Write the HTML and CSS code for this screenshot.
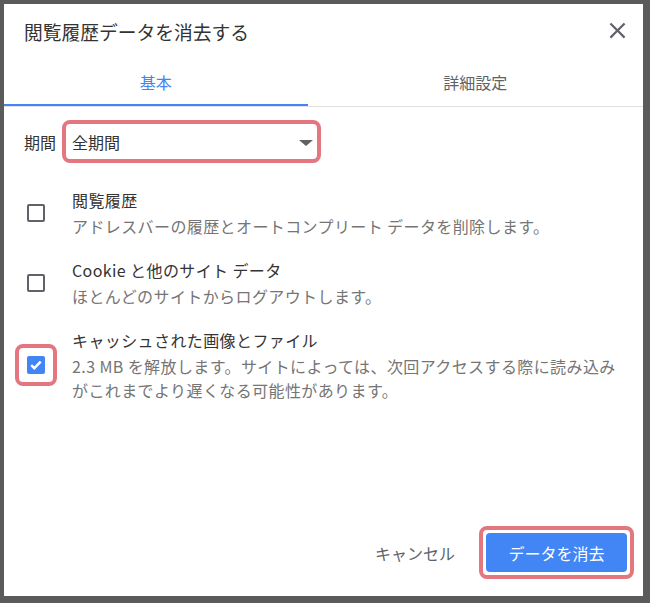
FILE: index.html
```html
<!DOCTYPE html>
<html lang="ja">
<head>
    <meta charset="UTF-8">
    <meta name="viewport" content="width=device-width, initial-scale=1.0">
    <title>閲覧履歴データを消去する</title>
    <link rel="stylesheet" href="styles.css">
</head>
<body>
    <div class="dialog">
        <div class="dialog-header">
            <h1 class="dialog-title">閲覧履歴データを消去する</h1>
            <button class="close-btn" aria-label="閉じる">
                <svg viewBox="0 0 24 24" width="27" height="27">
                    <path d="M19 6.41L17.59 5 12 10.59 6.41 5 5 6.41 10.59 12 5 17.59 6.41 19 12 13.41 17.59 19 19 17.59 13.41 12z"/>
                </svg>
            </button>
        </div>

        <div class="tabs">
            <div class="tab active">基本</div>
            <div class="tab">詳細設定</div>
        </div>

        <div class="dialog-body">
            <div class="period-row">
                <span class="period-label">期間</span>
                <div class="mark">
                    <div class="select">
                        <span>全期間</span>
                        <span class="select-arrow"></span>
                    </div>
                </div>
            </div>

            <ul class="options">
                <li class="option">
                    <span class="checkbox"></span>
                    <div class="option-text">
                        <div class="option-title">閲覧履歴</div>
                        <div class="option-desc">アドレスバーの履歴とオートコンプリート データを削除します。</div>
                    </div>
                </li>
                <li class="option">
                    <span class="checkbox"></span>
                    <div class="option-text">
                        <div class="option-title">Cookie と他のサイト データ</div>
                        <div class="option-desc">ほとんどのサイトからログアウトします。</div>
                    </div>
                </li>
                <li class="option">
                    <div class="mark mark-check">
                        <span class="checkbox checked">
                            <svg viewBox="0 0 18 18" width="18" height="18">
                                <path d="M4.2 9.2l3.1 3 6.4-6.6" fill="none" stroke="#fff" stroke-width="2.4"/>
                            </svg>
                        </span>
                    </div>
                    <div class="option-text">
                        <div class="option-title">キャッシュされた画像とファイル</div>
                        <div class="option-desc">2.3 MB を解放します。サイトによっては、次回アクセスする際に読み込みがこれまでより遅くなる可能性があります。</div>
                    </div>
                </li>
            </ul>
        </div>

        <div class="dialog-footer">
            <button class="btn-cancel">キャンセル</button>
            <div class="mark mark-btn">
                <button class="btn-primary">データを消去</button>
            </div>
        </div>
    </div>
</body>
</html>
```

FILE: styles.css
```css
body {
    margin: 0;
    height: 603px;
    background-color: #5b5b5b;
    font-family: "Noto Sans CJK JP", "Noto Sans", sans-serif;
    color: #333;
}
button {
    font-family: inherit;
    border: none;
    background: none;
    padding: 0;
    cursor: pointer;
}
.dialog {
    margin: 4px;
    width: 639px;
    height: 592px;
    background-color: #ffffff;
    display: flex;
    flex-direction: column;
}

/* header */
.dialog-header {
    height: 54px;
    display: flex;
    justify-content: space-between;
    align-items: flex-start;
    padding: 0 12px 0 20px;
    box-sizing: border-box;
}
.dialog-title {
    margin: 16px 0 0;
    font-size: 18.75px;
    line-height: 24px;
    font-weight: normal;
    color: #333;
}
.close-btn {
    margin-top: 13px;
    width: 27px;
    height: 27px;
    fill: #5f6368;
}

/* tabs */
.tabs {
    display: flex;
    border-bottom: 1px solid #e0e0e0;
}
.tab {
    flex: 1 1 auto;
    height: 48px;
    padding-top: 1px;
    box-sizing: border-box;
    border-bottom: 2px solid transparent;
    display: flex;
    justify-content: center;
    align-items: center;
    font-size: 16px;
    color: #5f6368;
}
.tab.active {
    color: #4285f4;
    border-bottom-color: #4285f4;
}

/* body */
.dialog-body {
    flex: 1;
    padding: 13px 20px 0;
    font-size: 16px;
}
.period-row {
    display: flex;
    align-items: center;
    gap: 6px;
}
.period-label {
    color: #333;
}
.mark {
    border: 4px solid #e4767f;
    border-radius: 8px;
}
.select {
    width: 251px;
    height: 35px;
    padding: 0 4px 0 6px;
    box-sizing: border-box;
    display: flex;
    justify-content: space-between;
    align-items: center;
    color: #333;
}
.select-arrow {
    width: 0;
    height: 0;
    border-left: 7px solid transparent;
    border-right: 7px solid transparent;
    border-top: 6px solid #616161;
    margin-top: 2px;
}

.options {
    list-style: none;
    margin: 25px 0 0;
    padding: 0;
    display: flex;
    flex-direction: column;
    gap: 20px;
}
.option {
    display: flex;
    align-items: center;
}
.checkbox {
    width: 18px;
    height: 18px;
    box-sizing: border-box;
    border: 2px solid #5f6368;
    border-radius: 2px;
    margin: 0 27px 0 3px;
    flex-shrink: 0;
}
.checkbox.checked {
    display: block;
    margin: 0;
    border: none;
    background-color: #4285f4;
}
.checkbox.checked svg {
    display: block;
}
.mark-check {
    padding: 8px;
    margin: -12px 15px -12px -9px;
}
.option-text {
    flex: 1;
    letter-spacing: 0.4px;
}
.option-title {
    line-height: 24px;
    margin-bottom: 2px;
    color: #333;
}
.option-desc {
    line-height: 24px;
    color: #757575;
}

/* footer */
.dialog-footer {
    display: flex;
    justify-content: flex-end;
    align-items: center;
    padding: 0 16px 24px;
}
.btn-cancel {
    height: 39px;
    padding: 0 16px;
    margin-right: 15px;
    font-size: 16px;
    color: #5f6368;
}
.mark-btn {
    padding: 3px;
    margin: -7px;
}
.btn-primary {
    display: block;
    width: 141px;
    height: 39px;
    border-radius: 4px;
    background-color: #4285f4;
    color: #ffffff;
    font-size: 16px;
}
```
